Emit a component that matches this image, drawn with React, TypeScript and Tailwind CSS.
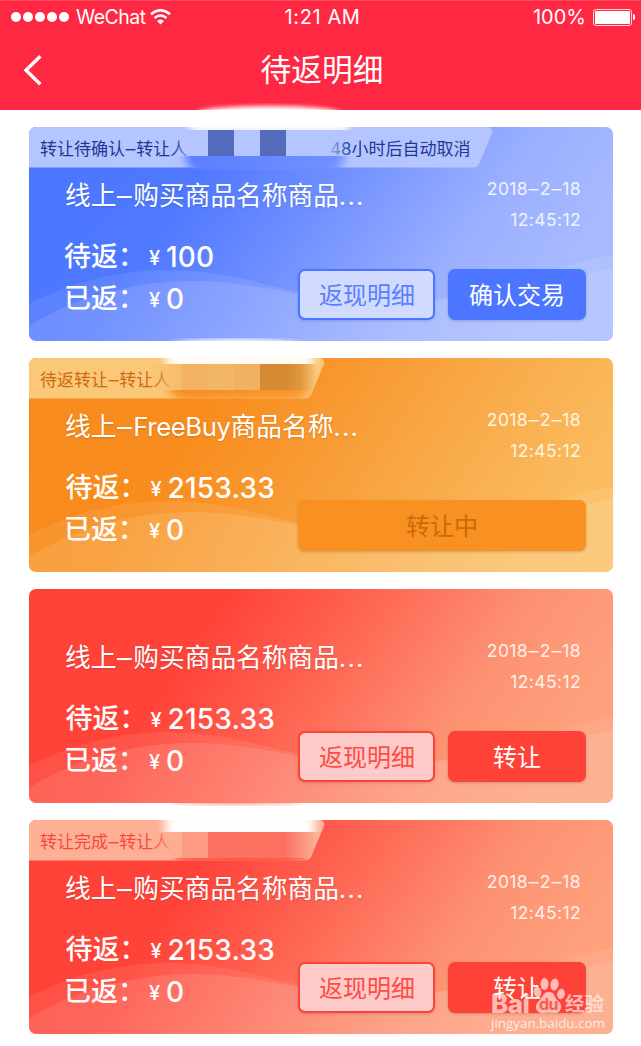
import type { ReactNode } from 'react';
import clsx from 'clsx';

type Tone = 'blue' | 'orange' | 'red';

interface Order {
  id: number;
  tone: Tone;
  tag?: ReactNode;
  wideTag?: boolean;
  title: ReactNode;
  pending: string;
  actions: ReactNode;
  mask?: ReactNode;
}

const cardTone: Record<Tone, string> = {
  blue: 'bg-[linear-gradient(124deg,#4c76ff_0%,#4f78ff_27%,#6b8cff_44%,#9aafff_70%,#a8baff_88%)]',
  orange: 'bg-[linear-gradient(124deg,#f78a1b_0%,#f88c1e_29%,#f8982f_45%,#f9ae4e_70%,#fbbb5e_88%)]',
  red: 'bg-[linear-gradient(124deg,#ff4238_0%,#ff4339_28%,#fe5e4e_44%,#fd9172_70%,#fea17c_88%)]',
};

const tagTone: Record<Tone, string> = {
  blue: 'text-[#b5c5ff]',
  orange: 'text-[#fbc779]',
  red: 'text-[#fdb094]',
};

const tagText: Record<Tone, string> = {
  blue: 'text-[#1d3795]',
  orange: 'text-[#cc6b0d]',
  red: 'text-[#f9483b]',
};

const waveTone: Record<Tone, string> = {
  blue: '#d0daff',
  orange: '#fce0ae',
  red: '#fcc8b8',
};

// Wide dash between Chinese words
function Dash() {
  return <span className="inline-block w-[0.66em] scale-x-115 text-center">–</span>;
}

function Waves({ tone }: { tone: Tone }) {
  const fadeId = `wave-${tone}`;
  return (
    <svg className="absolute inset-0" width="584" height="214" viewBox="0 0 584 214" fill={`url(#${fadeId})`}>
      <defs>
        <linearGradient id={fadeId}>
          <stop offset="0" stopColor={waveTone[tone]} stopOpacity="0.6" />
          <stop offset="1" stopColor={waveTone[tone]} />
        </linearGradient>
      </defs>
      <path
        fillOpacity="0.18"
        d="M0 177C45 154 92 143 140 143C188 143 230 156 269 165C330 179 380 181 425 170C465 162 495 151 531 141C550 136 567 131 584 128V214H0Z"
      />
      <path
        fillOpacity="0.25"
        d="M0 199C50 167 112 154 162 154C202 154 236 161 269 167C320 177 365 180 406 172C455 165 500 157 557 147L584 141V214H0Z"
      />
    </svg>
  );
}

function TagShape({ wide, tone }: { wide?: boolean; tone: Tone }) {
  const w = wide ? 464 : 296;
  return (
    <svg className={clsx('absolute left-0 top-0', tagTone[tone])} width={w} height="41" fill="currentColor">
      <path d={`M6 0H${w - 5}Q${w} 1 ${w - 1} 6L${w - 14} 37Q${w - 16} 40.5 ${w - 20} 40.5H0V6Q0 0 6 0Z`} />
    </svg>
  );
}

function OutlineButton({ tone, children }: { tone: Tone; children: ReactNode }) {
  return (
    <button
      className={clsx(
        'h-[51px] w-[137px] rounded-[7px] border-2 pl-px pt-[2px] text-[24px] leading-none shadow-[0_1px_3px_rgba(0,0,0,0.15)]',
        tone === 'blue' ? 'border-[#4c76ff] bg-[#d1dbff] text-[#5b80ff]' : 'border-[#fe4239] bg-[#ffcaca] text-[#fd4d43]'
      )}
    >
      {children}
    </button>
  );
}

function SolidButton({ tone, children }: { tone: Tone; children: ReactNode }) {
  return (
    <button
      className={clsx(
        'h-[51px] w-[138px] rounded-[7px] pt-[2px] text-[24px] leading-none text-white shadow-[0_1px_3px_rgba(0,0,0,0.18)]',
        tone === 'blue' ? 'bg-[#4c76ff]' : 'bg-[#fe4238]'
      )}
    >
      {children}
    </button>
  );
}

function Amount({ label, value, inset }: { label: string; value: string; inset?: boolean }) {
  return (
    <div className={clsx('flex h-[42px] items-center font-medium', inset && 'pl-[1.5px]')}>
      <span className="w-[85px] text-[27px]">{label}：</span>
      <span className="w-[17px] pt-[2px] text-[20px]">¥</span>
      <span className="pb-px font-[Inter] text-[28px] tracking-[0.2px]">{value}</span>
    </div>
  );
}

function OrderCard({ order }: { order: Order }) {
  const { tone } = order;
  return (
    <section className={clsx('relative h-[214px] shrink-0 rounded-[7px]', cardTone[tone])}>
      <div className="absolute inset-0 overflow-hidden rounded-[7px]">
        <Waves tone={tone} />
        {order.tag && <TagShape wide={order.wideTag} tone={tone} />}
      </div>
      <div className="relative flex h-full flex-col text-white">
        <div className={clsx('flex h-[41px] items-center pl-[11px] pt-[4px] text-[17px] leading-none', tagText[tone])}>
          {order.tag}
        </div>
        <div className="flex h-[68px] justify-between pl-9 pr-8">
          <h2 className="pt-[10px] text-[25.7px] leading-[36px] [text-shadow:0_1px_2px_rgba(0,0,0,0.15)]">
            {order.title}
            <span className="tracking-[1.2px]">...</span>
          </h2>
          <div className="pt-[5px] text-right font-[Inter] text-[17.5px] leading-[31px] tracking-[0.4px] text-white/85">
            <p>
              2018<Dash />2<Dash />18
            </p>
            <p>12:45:12</p>
          </div>
        </div>
        <div className="flex justify-between pl-[35px] pr-[27px]">
          <div>
            <Amount label="待返" value={order.pending} inset={tone !== 'blue'} />
            <Amount label="已返" value="0" />
          </div>
          <div className="flex gap-[13px] pt-[33px]">{order.actions}</div>
        </div>
      </div>
      {order.mask}
    </section>
  );
}

// Smudge that hides the name of the other party
function BlueMask() {
  return (
    <div className="absolute left-[140px] top-[-24px] h-[68px] w-[200px]">
      <div className="absolute left-[12px] top-0 h-[7px] w-[174px] overflow-hidden">
        <div className="absolute left-[16px] top-[3px] h-[14px] w-[144px] rounded-[50%] bg-white blur-[2px]" />
      </div>
      <div className="absolute left-0 top-[20px] h-[7px] w-[200px] overflow-hidden">
        <div className="absolute left-[21px] top-[-4px] h-[14px] w-[158px] bg-white blur-[4px]" />
      </div>
      <div className="absolute left-0 top-[53px] h-[14px] w-[200px] overflow-hidden">
        <div className="absolute left-[16px] top-[-23px] h-[42px] w-[160px] rounded-[34px] bg-linear-to-r from-[#587dff] to-[#7491ff] blur-[4px]" />
      </div>
      <div className="absolute left-[3px] top-[27px] flex h-[26px]">
        <div className="w-[24px] bg-linear-to-r from-transparent to-[#b5c5ff]" />
        <div className="w-[12px] bg-[#b5c5ff]" />
        <div className="w-[26px] bg-[#546bbc]" />
        <div className="w-[26px] bg-[#b5c5ff]" />
        <div className="w-[26px] bg-[#546bbc]" />
        <div className="w-[40px] bg-[#b5c5ff]" />
        <div className="w-[26px] bg-linear-to-r from-[#b5c5ff] to-transparent" />
      </div>
    </div>
  );
}

function OrangeMask() {
  return (
    <div className="absolute left-[114px] top-[-20px] h-[64px] w-[190px]">
      <div className="absolute left-[10px] top-0 h-[5px] w-[170px] overflow-hidden">
        <div className="absolute left-[14px] top-[1px] h-[12px] w-[136px] rounded-[50%] bg-white blur-[2px]" />
      </div>
      <div className="absolute left-[4px] top-[20px] h-[6px] w-[180px] overflow-hidden">
        <div className="absolute left-[19px] top-[-5px] h-[15px] w-[147px] bg-white blur-[4px]" />
      </div>
      <div className="absolute left-0 top-[52px] h-[9px] w-[190px] overflow-hidden">
        <div className="absolute left-[24px] top-[-28px] h-[38px] w-[144px] rounded-[30px] bg-linear-to-r from-[#f88c1e] to-[#f8962c] blur-[4px]" />
      </div>
      <div className="absolute left-[5px] top-[26px] flex h-[26px]">
        <div className="w-[34px] bg-linear-to-r from-transparent to-[#f6bc6d]" />
        <div className="w-[26px] bg-[#f2b264]" />
        <div className="w-[26px] bg-[#f2b668]" />
        <div className="w-[26px] bg-[#f0b164]" />
        <div className="w-[26px] bg-[#d68a33]" />
        <div className="w-[30px] bg-linear-to-r from-[#d68a33] via-[#df983f] to-[#fbc779]/0" />
      </div>
    </div>
  );
}

function RedMask() {
  return (
    <div className="absolute left-[114px] top-[-20px] h-[64px] w-[190px]">
      <div className="absolute left-[10px] top-[3px] h-[3px] w-[170px] overflow-hidden">
        <div className="absolute left-[18px] top-[-5px] h-[6px] w-[130px] rounded-[50%] bg-[#fb8575] blur-[2px]" />
      </div>
      <div className="absolute left-[4px] top-[20px] h-[12px] w-[180px] overflow-hidden">
        <div className="absolute left-[18px] top-[-8px] h-[28px] w-[150px] rounded-[8px] bg-white blur-[5px]" />
      </div>
      <div className="absolute left-0 top-[58px] h-[3px] w-[190px] overflow-hidden">
        <div className="absolute left-[30px] top-[-8px] h-[14px] w-[136px] rounded-[50%] bg-[#fe5a4b] blur-[2px]" />
      </div>
      <div className="absolute left-[5px] top-[32px] flex h-[26px]">
        <div className="w-[34px] bg-linear-to-r from-transparent to-[#fcae91]" />
        <div className="w-[26px] bg-[#fd9c83]" />
        <div className="w-[26px] bg-[#fb7262]" />
        <div className="w-[52px] bg-[#fc7060]" />
        <div className="w-[30px] bg-linear-to-r from-[#fc7364] to-transparent" />
      </div>
    </div>
  );
}

function Watermark() {
  return (
    <div className="absolute left-[491px] top-[975px] h-[58px] w-[118px] font-[Inter] text-[#fff1ec]/70">
      <span className="absolute left-0 top-[17px] text-[26px] font-extrabold leading-[24px] tracking-[-0.6px]">Bai</span>
      <svg className="absolute left-[42px] top-[2px]" width="32" height="38" viewBox="0 0 32 38" fill="currentColor">
        <ellipse cx="4.5" cy="15" rx="3.8" ry="5.3" transform="rotate(-12 4.5 15)" />
        <ellipse cx="11.5" cy="7" rx="4" ry="6" />
        <ellipse cx="21.5" cy="7.5" rx="4" ry="6" transform="rotate(10 21.5 7.5)" />
        <ellipse cx="28" cy="17" rx="3.8" ry="5.3" transform="rotate(12 28 17)" />
        <path d="M16 15C22 15 21 20 25 24C31 28 28 37 21 36C17 35.5 15 35.5 11 36C3 37 0 29 6 24C10 20 10 15 16 15Z" />
      </svg>
      <span className="absolute left-[48px] top-[20px] text-[16px] font-bold leading-[18px] tracking-[-0.6px] text-[#fb5a4e]">du</span>
      <span className="absolute left-[74px] top-[16px] font-['Noto_Sans_CJK_SC'] text-[19.5px] font-bold leading-[23px]">经验</span>
      <span className="absolute left-0 top-[41px] font-['Open_Sans'] text-[13.4px] leading-[15px] text-[#fff4ef]/90">
        jingyan.baidu.com
      </span>
    </div>
  );
}

const purchaseTitle = (
  <>
    线上
    <Dash />
    购买商品名称商品
  </>
);

const orders: Order[] = [
  {
    id: 1,
    tone: 'blue',
    wideTag: true,
    tag: (
      <>
        <span className="w-[290px]">
          转让待确认
          <Dash />
          转让人
        </span>
        <span>48小时后自动取消</span>
      </>
    ),
    title: purchaseTitle,
    pending: '100',
    actions: (
      <>
        <OutlineButton tone="blue">返现明细</OutlineButton>
        <SolidButton tone="blue">确认交易</SolidButton>
      </>
    ),
    mask: <BlueMask />,
  },
  {
    id: 2,
    tone: 'orange',
    tag: (
      <span>
        待返转让
        <Dash />
        转让人
      </span>
    ),
    title: (
      <>
        线上
        <Dash />
        <span className="tracking-[-0.4px]">FreeBuy</span>商品名称
      </>
    ),
    pending: '2153.33',
    actions: (
      <button className="h-[51px] w-[288px] rounded-[7px] bg-[#f89022] pt-[2px] text-[24px] leading-none text-[#cc6a08] shadow-[0_1px_3px_rgba(0,0,0,0.18)]">
        转让中
      </button>
    ),
    mask: <OrangeMask />,
  },
  {
    id: 3,
    tone: 'red',
    title: purchaseTitle,
    pending: '2153.33',
    actions: (
      <>
        <OutlineButton tone="red">返现明细</OutlineButton>
        <SolidButton tone="red">转让</SolidButton>
      </>
    ),
  },
  {
    id: 4,
    tone: 'red',
    tag: (
      <span>
        转让完成
        <Dash />
        转让人
      </span>
    ),
    title: purchaseTitle,
    pending: '2153.33',
    actions: (
      <>
        <OutlineButton tone="red">返现明细</OutlineButton>
        <SolidButton tone="red">转让</SolidButton>
      </>
    ),
    mask: <RedMask />,
  },
];

export default function App() {
  return (
    <div className="relative h-[1046px] w-[641px] overflow-hidden whitespace-nowrap bg-white font-['Inter','Noto_Sans_CJK_SC',sans-serif]">
      <header className="h-[110px] border-t border-[#ff4a5c] bg-[#ff2843] text-white">
        <div className="grid h-[32px] grid-cols-3 items-center pl-[11px] pr-[6px] text-[20px]">
          <div className="flex items-center">
            <div className="flex gap-[2px]">
              {[0, 1, 2, 3, 4].map((i) => (
                <span key={i} className="size-[10px] rounded-full bg-white" />
              ))}
            </div>
            <span className="ml-[7px] w-[74px] pt-px text-[19.5px] tracking-[-0.5px]">WeChat</span>
            <svg width="21" height="16" viewBox="0 0 21 16" fill="none" stroke="white" strokeWidth="2.4">
              <path d="M1 5.2Q10.5 -2.6 20 5.2" />
              <path d="M4.5 9Q10.5 4 16.5 9" />
              <path d="M10.5 15.5L7 12Q10.5 9 14 12Z" fill="white" stroke="none" />
            </svg>
          </div>
          <span className="pr-px text-center tracking-[0.6px]">1:21 AM</span>
          <div className="flex items-center justify-end">
            <span className="mr-[7px]">100%</span>
            <span className="h-[17px] w-[39px] rounded-[3px] border border-white/80 p-px">
              <span className="block h-full rounded-[1px] bg-white" />
            </span>
            <span className="ml-px h-[6px] w-[2px] rounded-r-full bg-white" />
          </div>
        </div>
        <div className="relative flex h-[74px] items-center justify-center pl-[3px]">
          <svg className="absolute left-[23px] top-[21px]" width="20" height="33" viewBox="0 0 20 33" fill="none" stroke="white" strokeWidth="3.4">
            <path d="M17.3 2.3L3 16.3L17.3 30.3" />
          </svg>
          <h1 className="text-[30.7px]">待返明细</h1>
        </div>
      </header>
      <main className="flex flex-col gap-[17px] pl-[29px] pr-7 pt-[17px]">
        {orders.map((order) => (
          <OrderCard key={order.id} order={order} />
        ))}
      </main>
      <Watermark />
    </div>
  );
}
